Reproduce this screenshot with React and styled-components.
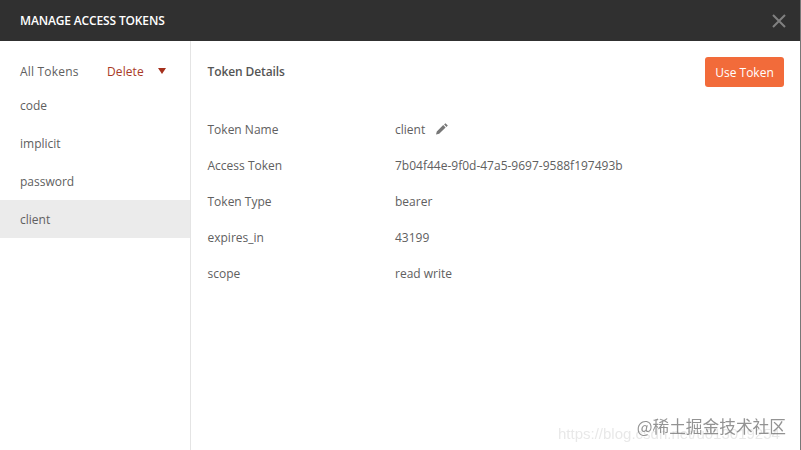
import React from "react";
import styled, { createGlobalStyle } from "styled-components";

const Global = createGlobalStyle`
  html, body { margin: 0; padding: 0; background: #fff; }
  #root { width: 801px; height: 450px; overflow: hidden; }
  * { box-sizing: border-box; }
`;

const Dialog = styled.div`
  position: relative;
  width: 801px;
  height: 450px;
  display: flex;
  flex-direction: column;
  background: #fff;
  border-right: 1px solid #777;
  font-family: "Open Sans", "Liberation Sans", sans-serif;
  font-size: 12px;
  color: #606060;
`;

const Header = styled.header`
  height: 41px;
  flex: none;
  background: #303030;
  display: flex;
  align-items: center;
  justify-content: space-between;
  padding: 0 14px 0 20px;
`;

const Title = styled.h1`
  margin: 0;
  font-size: 12px;
  font-weight: 600;
  letter-spacing: -0.15px;
  color: #fff;
`;

const Close = styled.svg`
  width: 14px;
  height: 14px;
  display: block;
`;

const Body = styled.div`
  flex: 1;
  display: flex;
  min-height: 0;
`;

const Sidebar = styled.aside`
  width: 191px;
  flex: none;
  border-right: 1px solid #e4e4e4;
  padding-top: 15px;
`;

const SidebarHead = styled.div`
  height: 30px;
  display: flex;
  align-items: center;
  padding: 0 24px 0 20px;
`;

const AllTokens = styled.span`
  width: 87px;
  letter-spacing: 0.2px;
`;

const Delete = styled.span`
  color: #a93a26;
  flex: 1;
  letter-spacing: 0.1px;
`;

const Caret = styled.span`
  width: 0;
  height: 0;
  border-left: 4px solid transparent;
  border-right: 4px solid transparent;
  border-top: 6px solid #a5301c;
`;

const TokenItem = styled.div`
  height: 38px;
  display: flex;
  align-items: center;
  padding-left: 20px;
  background: ${(p) => (p.$active ? "#ebebeb" : "transparent")};
`;

const Details = styled.main`
  flex: 1;
  padding: 16px 16px 0 16.5px;
`;

const DetailsHead = styled.div`
  height: 30px;
  display: flex;
  align-items: center;
  justify-content: space-between;
`;

const DetailsTitle = styled.h2`
  margin: 0;
  font-size: 12px;
  font-weight: 600;
  letter-spacing: -0.1px;
  color: #555;
  position: relative;
  top: -1px;
`;

const UseToken = styled.button`
  width: 79px;
  height: 30px;
  border: 0;
  border-radius: 3px;
  padding: 0;
  background: #f26b3a;
  color: #fff;
  font: 400 12px "Open Sans", "Liberation Sans", sans-serif;
`;

const Rows = styled.dl`
  margin: 24px 0 0;
`;

const Row = styled.div`
  height: 36px;
  display: grid;
  grid-template-columns: 187.5px 1fr;
  align-items: center;
`;

const Label = styled.dt`
  margin: 0;
`;

const Value = styled.dd`
  margin: 0;
  display: flex;
  align-items: center;
  gap: 10px;
`;

const Pencil = styled.svg`
  width: 14px;
  height: 14px;
  display: block;
`;

const Watermark = styled.div`
  position: absolute;
  right: 6px;
  bottom: 8px;
  width: 236px;
  height: 24px;
  filter: blur(0.4px);
`;

const WatermarkUrl = styled.span`
  position: absolute;
  left: 0;
  bottom: 0;
  font: 15px "Liberation Sans", sans-serif;
  white-space: nowrap;
  color: rgba(190, 190, 190, 0.35);
`;

const WatermarkBrand = styled.span`
  position: absolute;
  right: 8px;
  bottom: 4px;
  font: 16.7px "Noto Sans CJK SC", sans-serif;
  white-space: nowrap;
  color: rgba(120, 120, 120, 0.8);
`;

const rows = [
  ["Token Name", "client"],
  ["Access Token", "7b04f44e-9f0d-47a5-9697-9588f197493b"],
  ["Token Type", "bearer"],
  ["expires_in", "43199"],
  ["scope", "read write"],
];

export default function App() {
  return (
    <Dialog>
      <Global />
      <Header>
        <Title>MANAGE ACCESS TOKENS</Title>
        <Close viewBox="0 0 14 14">
          <path d="M1 1L13 13M13 1L1 13" stroke="#808080" strokeWidth="2" fill="none" />
        </Close>
      </Header>
      <Body>
        <Sidebar>
          <SidebarHead>
            <AllTokens>All Tokens</AllTokens>
            <Delete>Delete</Delete>
            <Caret />
          </SidebarHead>
          {["code", "implicit", "password", "client"].map((t) => (
            <TokenItem key={t} $active={t === "client"}>{t}</TokenItem>
          ))}
        </Sidebar>
        <Details>
          <DetailsHead>
            <DetailsTitle>Token Details</DetailsTitle>
            <UseToken>Use Token</UseToken>
          </DetailsHead>
          <Rows>
            {rows.map(([k, v], i) => (
              <Row key={k}>
                <Label>{k}</Label>
                <Value>
                  {v}
                  {i === 0 && (
                    <Pencil viewBox="0 0 14 14">
                      <path d="M10.4 1.2l2.4 2.4-1.3 1.3-2.4-2.4zM8.2 3l2.4 2.4-6.4 6.4-3.2.8.8-3.2z" fill="#777" />
                    </Pencil>
                  )}
                </Value>
              </Row>
            ))}
          </Rows>
        </Details>
      </Body>
      <Watermark>
        <WatermarkUrl>https://blog.csdn.net/u013019254</WatermarkUrl>
        <WatermarkBrand>@稀土掘金技术社区</WatermarkBrand>
      </Watermark>
    </Dialog>
  );
}
